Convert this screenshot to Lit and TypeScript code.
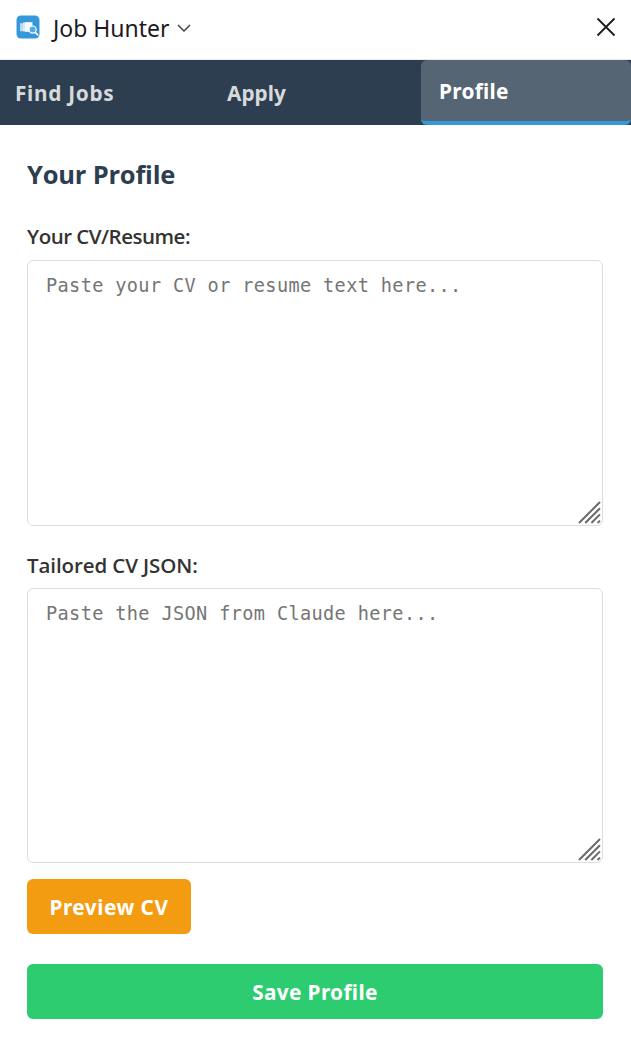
import { LitElement, html, css, svg } from "lit";
import { customElement, state } from "lit/decorators.js";

const grip = svg`<path d="M1 22 22 1M7.2 22 22 7.2M13.4 22 22 13.4M19.6 22 22 19.6" fill="none" stroke="#6a6a6a" stroke-width="2"/>`;

@customElement("app-root")
export class AppRoot extends LitElement {
  static styles = css`
    * { box-sizing: border-box; }
    :host {
      display: flex;
      flex-direction: column;
      height: 1037px;
      overflow: hidden;
      background: #fff;
      color: #333;
      font-family: "Open Sans", "Noto Sans", sans-serif;
    }
    button { border: 0; font-family: inherit; cursor: pointer; white-space: nowrap; }
    .titlebar {
      display: flex;
      align-items: center;
      height: 60px;
      padding: 0 15px 5px 16px;
      border-bottom: 1px solid #ebebeb;
      flex: none;
    }
    .logo { width: 24px; height: 24px; display: block; }
    .title { margin-left: 13px; font: 400 23px/32px "Noto Sans", sans-serif; color: #1b1b1f; white-space: nowrap; padding-top: 1px; width: 118px; }
    .chevron { width: 14px; height: 8px; margin-left: 6px; margin-top: 2px; }
    .close { width: 20px; height: 20px; margin-left: auto; }
    .tabs { display: grid; grid-template-columns: 211px 210px 210px; height: 65px; background: #2d3e50; flex: none; }
    .tab { padding: 0 15px; text-align: left; background: none; color: #d7dadd; font: 700 20.8px/28px "Noto Sans", sans-serif; }
    .tab.active { padding: 0 18px; background: #566573; color: #fff; border-bottom: 4px solid #3498db; border-radius: 6px; }
    .find-jobs { letter-spacing: 0.7px; }
    .apply { padding-left: 16px; }
    .profile { letter-spacing: 0.3px; }
    .panel { display: flex; flex-direction: column; padding: 32px 28px 0 27px; }
    h2 { margin: 0; font: 700 25.5px/34px "Open Sans", sans-serif; letter-spacing: -0.2px; color: #2c3e50; }
    label { font-size: 20.5px; line-height: 28px; font-weight: 600; margin-top: 31px; }
    .cv-label { letter-spacing: -0.5px; }
    .field { position: relative; height: 266px; margin-top: 10px; }
    .json-label { margin-top: 25px; letter-spacing: -0.1px; }
    .json { height: 275px; margin-top: 9px; }
    textarea {
      display: block;
      width: 100%;
      height: 100%;
      margin: 0;
      padding: 11px 18px;
      border: 1px solid #ddd;
      border-radius: 6px;
      resize: none;
      background: #fff;
      font: 400 18.6px/28px "DejaVu Sans Mono", monospace;
      letter-spacing: 0.35px;
    }
    textarea::placeholder { color: #757575; opacity: 1; }
    .grip { position: absolute; right: 2px; bottom: 1px; width: 23px; height: 24px; pointer-events: none; }
    .preview, .save { height: 55px; border-radius: 6px; color: #fff; font: 700 20.8px/28px "Noto Sans", sans-serif; padding: 0; }
    .preview { width: 164px; margin-top: 16px; background: #f39c12; letter-spacing: 0.5px; }
    .save { margin-top: 30px; background: #2ecc71; letter-spacing: 0.35px; }
  `;

  @state() private active = "Profile";

  render() {
    return html`
      <header class="titlebar">
        <svg class="logo" viewBox="0 0 24 24">
          <rect x=".5" y=".5" width="23" height="23" rx="4.5" fill="#3498db"/>
          <path d="M4 8.2h3v8H4z" fill="#b9dcf4"/>
          <path d="M7 7.5h8v9H7z" fill="#d9ecf9"/>
          <path d="M9 7.2h7.5v9.5H9z" fill="#f4faff"/>
          <circle cx="16.6" cy="14.6" r="3.6" fill="#55a9e1" stroke="#fff" stroke-width="1.2"/>
          <path d="m19.2 17.4 3 3" stroke="#fff" stroke-width="1.5"/>
        </svg>
        <span class="title">Job Hunter</span>
        <svg class="chevron" viewBox="0 0 14 8"><path d="m1 1 6 6 6-6" fill="none" stroke="#444" stroke-width="1.5"/></svg>
        <svg class="close" viewBox="0 0 20 20"><path d="m1.5 1.5 17 17m0-17-17 17" stroke="#1b1b1f" stroke-width="1.8"/></svg>
      </header>
      <nav class="tabs">
        ${["Find Jobs", "Apply", "Profile"].map(
          (t) => html`<button class="tab ${t.toLowerCase().replace(" ", "-")} ${this.active === t ? "active" : ""}" @click=${() => (this.active = t)}>${t}</button>`
        )}
      </nav>
      <main class="panel">
        <h2>Your Profile</h2>
        <label class="cv-label" for="cv">Your CV/Resume:</label>
        <div class="field">
          <textarea id="cv" placeholder="Paste your CV or resume text here..."></textarea>
          <svg class="grip" viewBox="0 0 23 24">${grip}</svg>
        </div>
        <label class="json-label" for="json">Tailored CV JSON:</label>
        <div class="field json">
          <textarea id="json" placeholder="Paste the JSON from Claude here..."></textarea>
          <svg class="grip" viewBox="0 0 23 24">${grip}</svg>
        </div>
        <button class="preview">Preview CV</button>
        <button class="save">Save Profile</button>
      </main>
    `;
  }
}
